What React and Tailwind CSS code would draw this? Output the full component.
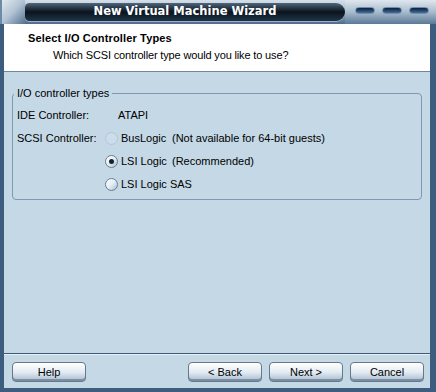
import React from "react";

function Radio({ checked, disabled }) {
  return (
    <span
      className={
        "relative inline-block shrink-0 w-[13px] h-[13px] rounded-full border " +
        (disabled
          ? "border-[#b3c7d8] bg-[#cbdcea]"
          : "border-[#667f98] bg-gradient-to-br from-[#ffffff] via-[#e6edf3] to-[#a9bfd2]")
      }
    >
      {checked && (
        <span className="absolute left-[3px] top-[3px] w-[5px] h-[5px] rounded-full bg-[#15222f]" />
      )}
    </span>
  );
}

function Btn({ children }) {
  return (
    <button className="h-[20px] w-[74px] rounded-[4px] border border-[#66788a] bg-gradient-to-b from-[#ffffff] via-[#e4ecf3] to-[#a7bbcd] text-[11px] text-black leading-none shadow-[inset_0_-2px_0_#7a90a6]">
      {children}
    </button>
  );
}

function Pill() {
  return (
    <span className="block w-[20px] h-[7px] rounded-full border border-[#6f8eae] bg-gradient-to-b from-[#0f2238] via-[#23466c] to-[#4a6f95]" />
  );
}

export default function App() {
  return (
    <div
      className="w-[436px] h-[392px] flex flex-col bg-[#c4d8e6] text-[11px] text-black overflow-hidden"
      style={{ fontFamily: "'Liberation Sans', Arial, sans-serif" }}
    >
      {/* Title bar */}
      <div className="h-[24px] shrink-0 flex items-stretch bg-gradient-to-b from-[#d7e0e8] via-[#9fb3c6] to-[#4d6c8b]">
        <div className="w-[25px] bg-gradient-to-br from-[#e3eaf0] via-[#b0c2d3] to-[#56738f] border-l-[2px] border-[#6f8aa5]" />
        <div className="flex-1 mt-[3px] mb-[3px] rounded-l-[6px] rounded-r-[12px] bg-gradient-to-b from-[#50687f] via-[#0b141d] to-[#20354a] flex items-center justify-center shadow-[0_1px_0_#9bb0c4]">
          <span
            className="text-white font-bold text-[11.5px]"
            style={{ fontFamily: "'DejaVu Sans', sans-serif" }}
          >
            New Virtual Machine Wizard
          </span>
        </div>
        <div className="w-[91px] flex items-start justify-end gap-[7px] pt-[7px] pr-[7px] bg-gradient-to-b from-[#dfe7ee] via-[#a9bccd] to-[#5b7997]">
          <Pill />
          <Pill />
          <Pill />
        </div>
      </div>

      <div className="flex-1 flex border-l-[4px] border-r-[6px] border-b-[4px] border-[#3d5d7e]">
        <div className="flex-1 flex flex-col">
          {/* header */}
          <div className="h-[48px] shrink-0 bg-white border-b border-[#71869b] pl-[24px] pt-[7px]">
            <div className="font-bold text-[11px] tracking-[0.15px] leading-[14px]">Select I/O Controller Types</div>
            <div className="pl-[25px] mt-[4px] leading-[13px] tracking-[-0.15px]">
              Which SCSI controller type would you like to use?
            </div>
          </div>

          {/* body */}
          <div className="flex-1 flex flex-col">
            <div className="px-[8px] pt-[21px]">
              <div className="relative border border-[#7f99b2] rounded-[4px] pl-[4px] pt-[10px] pb-[3px]">
                <span className="absolute -top-[8px] left-[1px] bg-[#c4d8e6] px-[3px] leading-[14px]">
                  I/O controller types
                </span>
                <div className="flex items-center h-[23px]">
                  <span className="w-[101px]">IDE Controller:</span>
                  <span>ATAPI</span>
                </div>
                <div className="flex">
                  <span className="w-[88px] h-[23px] flex items-center">SCSI Controller:</span>
                  <div className="flex flex-col">
                    <div className="flex items-center h-[23px]">
                      <Radio disabled />
                      <span className="ml-[3px] w-[51px]">BusLogic</span>
                      <span>(Not available for 64-bit guests)</span>
                    </div>
                    <div className="flex items-center h-[23px]">
                      <Radio checked />
                      <span className="ml-[3px] w-[51px]">LSI Logic</span>
                      <span>(Recommended)</span>
                    </div>
                    <div className="flex items-center h-[23px]">
                      <Radio />
                      <span className="ml-[3px]">LSI Logic SAS</span>
                    </div>
                  </div>
                </div>
              </div>
            </div>
            <div className="flex-1" />
            <div className="h-px bg-[#3d5a78] shadow-[0_1px_0_#e8f0f6]" />
            <div className="h-[34px] shrink-0 flex items-start pt-[8px] pl-[8px] pr-[6px]">
              <Btn>Help</Btn>
              <div className="flex-1" />
              <div className="flex gap-[7px]">
                <Btn>&lt; Back</Btn>
                <Btn>Next &gt;</Btn>
                <Btn>Cancel</Btn>
              </div>
            </div>
          </div>
        </div>
      </div>
    </div>
  );
}
